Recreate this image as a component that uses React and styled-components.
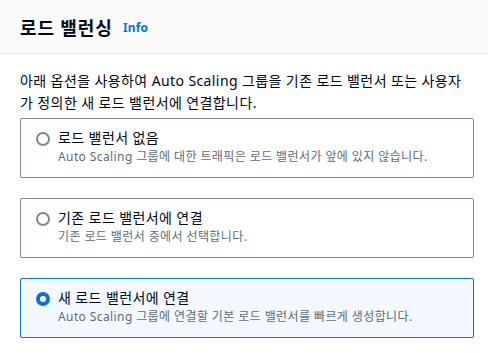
import React from "react";
import styled, { createGlobalStyle } from "styled-components";

const Global = createGlobalStyle`
  html, body { margin: 0; padding: 0; background: #ffffff; }
  body { font-family: "Noto Sans", "Noto Sans CJK KR", sans-serif; color: #000716; letter-spacing: 0.4px; }
`;

const Header = styled.header`
  height: 53px;
  background: #fafafa;
  border-bottom: 1px solid #e9ebed;
  display: flex;
  align-items: center;
  padding: 0 20px;
  gap: 10px;
  box-sizing: content-box;
`;

const Title = styled.h2`
  margin: 0;
  font-size: 18px;
  font-weight: 700;
  line-height: 22px;
  letter-spacing: 1px;
  color: #000716;
  font-family: "Noto Sans CJK KR", "Noto Sans", sans-serif;
`;

const InfoLink = styled.a`
  font-size: 12px;
  font-weight: 700;
  letter-spacing: 0.2px;
  color: #0972d3;
  text-decoration: none;
  font-family: "Noto Sans", "Noto Sans CJK KR", sans-serif;
  margin-top: 2px;
`;

const Body = styled.div`
  padding: 16px 14px 0 20px;
`;

const Description = styled.p`
  margin: 0 0 4px 0;
  font-size: 14px;
  line-height: 22px;
  color: #000716;
`;

const Options = styled.div`
  display: flex;
  flex-direction: column;
  gap: 20px;
`;

const Tile = styled.label`
  display: flex;
  align-items: flex-start;
  gap: 8px;
  height: 58px;
  box-sizing: content-box;
  padding: 0 15px;
  border: 1px solid ${(p) => (p.$selected ? "#0972d3" : "#7d8998")};
  background: ${(p) => (p.$selected ? "#f2f8fd" : "#ffffff")};
  border-radius: 2px;
  cursor: pointer;
`;

const Radio = styled.span`
  flex: none;
  width: 14px;
  height: 14px;
  box-sizing: border-box;
  border-radius: 50%;
  margin-top: 13px;
  border: ${(p) => (p.$checked ? "4px solid #0972d3" : "2px solid #7d8998")};
  background: #ffffff;
`;

const TileText = styled.div`
  display: flex;
  flex-direction: column;
  padding-top: 9px;
`;

const Label = styled.span`
  font-size: 14px;
  line-height: 20px;
  color: #000716;
`;

const Hint = styled.span`
  font-size: 12px;
  line-height: 18px;
  color: #5f6b7a;
`;

const options = [
  {
    label: "로드 밸런서 없음",
    hint: "Auto Scaling 그룹에 대한 트래픽은 로드 밸런서가 앞에 있지 않습니다.",
  },
  {
    label: "기존 로드 밸런서에 연결",
    hint: "기존 로드 밸런서 중에서 선택합니다.",
  },
  {
    label: "새 로드 밸런서에 연결",
    hint: "Auto Scaling 그룹에 연결할 기본 로드 밸런서를 빠르게 생성합니다.",
    selected: true,
  },
];

export default function App() {
  return (
    <>
      <Global />
      <Header>
        <Title>로드 밸런싱</Title>
        <InfoLink href="#">Info</InfoLink>
      </Header>
      <Body>
        <Description>
          아래 옵션을 사용하여 Auto Scaling 그룹을 기존 로드 밸런서 또는 사용자가 정의한 새 로드 밸런서에 연결합니다.
        </Description>
        <Options>
          {options.map((o) => (
            <Tile key={o.label} $selected={o.selected}>
              <Radio $checked={o.selected} />
              <TileText>
                <Label>{o.label}</Label>
                <Hint>{o.hint}</Hint>
              </TileText>
            </Tile>
          ))}
        </Options>
      </Body>
    </>
  );
}
